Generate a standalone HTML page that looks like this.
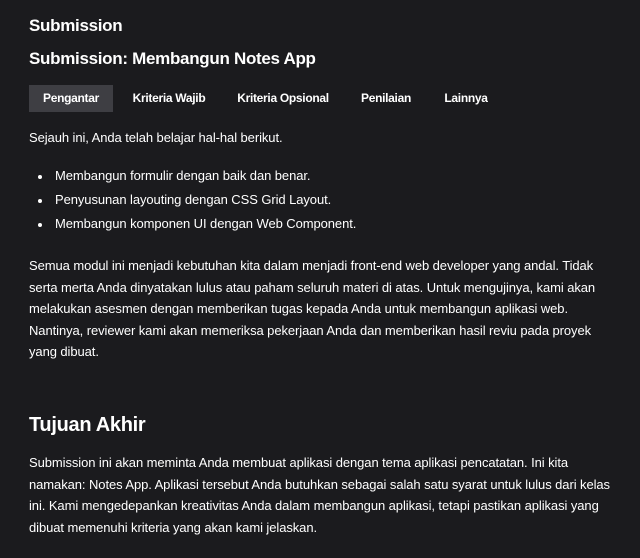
<!DOCTYPE html>
<html><head><meta charset="utf-8"><style>
body{margin:0;background:#1b1b1e;color:#fff;font-family:"Liberation Sans",sans-serif;width:640px;height:558px;overflow:hidden;position:relative}
.a{position:absolute;left:29px;white-space:nowrap}
.p{font-size:13px;letter-spacing:-0.08px;line-height:21.5px}
.tab{position:absolute;top:85px;height:27px;line-height:27px;font-size:12px;font-weight:bold;letter-spacing:-0.3px;text-align:center}
.li{position:absolute;left:38px;font-size:13px;letter-spacing:-0.08px;white-space:nowrap}
.li:before{content:"";position:absolute;left:0;top:7px;width:4px;height:4px;border-radius:50%;background:#fff}
.li span{margin-left:17px}
</style></head><body>
<div class="a" style="top:16px;font-size:17px;font-weight:bold;letter-spacing:-0.3px">Submission</div>
<div class="a" style="top:49px;font-size:17px;font-weight:bold;letter-spacing:-0.3px">Submission: Membangun Notes App</div>
<div class="tab" style="left:29px;width:84px;background:#3e3e43">Pengantar</div>
<div class="tab" style="left:130px;width:78px">Kriteria Wajib</div>
<div class="tab" style="left:235px;width:96px">Kriteria Opsional</div>
<div class="tab" style="left:356px;width:60px">Penilaian</div>
<div class="tab" style="left:440px;width:52px">Lainnya</div>
<div class="a p" style="top:127px">Sejauh ini, Anda telah belajar hal-hal berikut.</div>
<div class="li" style="top:168px"><span>Membangun formulir dengan baik dan benar.</span></div>
<div class="li" style="top:192px"><span>Penyusunan layouting dengan CSS Grid Layout.</span></div>
<div class="li" style="top:216px"><span>Membangun komponen UI dengan Web Component.</span></div>
<div class="a p" style="top:255px">Semua modul ini menjadi kebutuhan kita dalam menjadi front-end web developer yang andal. Tidak<br>serta merta Anda dinyatakan lulus atau paham seluruh materi di atas. Untuk mengujinya, kami akan<br>melakukan asesmen dengan memberikan tugas kepada Anda untuk membangun aplikasi web.<br>Nantinya, reviewer kami akan memeriksa pekerjaan Anda dan memberikan hasil reviu pada proyek<br>yang dibuat.</div>
<div class="a" style="top:414px;font-size:20px;font-weight:bold;letter-spacing:-0.3px">Tujuan Akhir</div>
<div class="a p" style="top:452px">Submission ini akan meminta Anda membuat aplikasi dengan tema aplikasi pencatatan. Ini kita<br>namakan: Notes App. Aplikasi tersebut Anda butuhkan sebagai salah satu syarat untuk lulus dari kelas<br>ini. Kami mengedepankan kreativitas Anda dalam membangun aplikasi, tetapi pastikan aplikasi yang<br>dibuat memenuhi kriteria yang akan kami jelaskan.</div>
</body></html>
